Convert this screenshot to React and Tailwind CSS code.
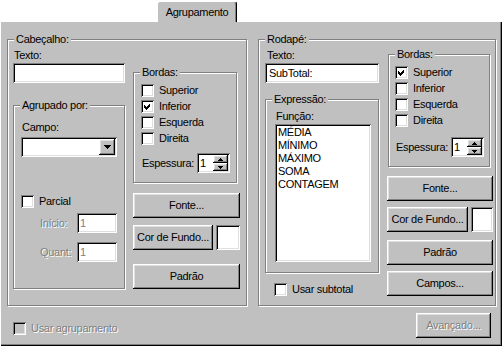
import React from "react";

const RAISED =
  "bg-[#c0c0c0] shadow-[inset_-1px_-1px_0_#000,inset_1px_1px_0_#fff,inset_-2px_-2px_0_#808080,inset_2px_2px_0_#dfdfdf]";
const SUNKEN =
  "shadow-[inset_1px_1px_0_#808080,inset_-1px_-1px_0_#fff,inset_2px_2px_0_#000,inset_-2px_-2px_0_#dfdfdf]";
const DISABLED_TEXT = "text-[#808080] [text-shadow:1px_1px_0_#fff]";

function Group({ label, className = "", children }) {
  return (
    <div
      className={`relative border border-[#808080] shadow-[inset_1px_1px_0_#fff,1px_1px_0_#fff] ${className}`}
    >
      <span className="absolute -top-[7px] left-[6px] px-[2px] bg-[#c0c0c0] leading-[13px] whitespace-nowrap">
        {label}
      </span>
      {children}
    </div>
  );
}

function Check({ checked, disabled, label, className = "" }) {
  return (
    <div className={`flex items-center h-[13px] ${className}`}>
      <div
        className={`w-[13px] h-[13px] shrink-0 ${SUNKEN} ${disabled ? "bg-[#c0c0c0]" : "bg-white"}`}
      >
        {checked && (
          <svg width="13" height="13" viewBox="0 0 13 13" shapeRendering="crispEdges">
            <path d="M3 5 L5 7 L9 3 L9 6 L5 10 L3 8 Z" fill="#000" />
          </svg>
        )}
      </div>
      <span className={`ml-[5px] leading-[13px] whitespace-nowrap ${disabled ? DISABLED_TEXT : ""}`}>
        {label}
      </span>
    </div>
  );
}

function Button({ children, className = "", disabled }) {
  return (
    <div
      className={`flex items-center justify-center h-[25px] ${RAISED} ${className} ${disabled ? DISABLED_TEXT : ""}`}
    >
      {children}
    </div>
  );
}

function Spin() {
  return (
    <div className={`flex w-[33px] h-[20px] p-[2px] bg-white ${SUNKEN}`}>
      <div className="flex-1 pl-[1px] leading-[16px]">1</div>
      <div className="flex flex-col w-[15px]">
        <div className={`h-[8px] flex items-center justify-center ${RAISED}`}>
          <svg width="5" height="3" viewBox="0 0 5 3" shapeRendering="crispEdges">
            <path d="M2 0 H3 V1 H4 V2 H5 V3 H0 V2 H1 V1 H2 Z" fill="#000" />
          </svg>
        </div>
        <div className={`h-[8px] flex items-center justify-center ${RAISED}`}>
          <svg width="5" height="3" viewBox="0 0 5 3" shapeRendering="crispEdges">
            <path d="M0 0 H5 V1 H4 V2 H3 V3 H2 V2 H1 V1 H0 Z" fill="#000" />
          </svg>
        </div>
      </div>
    </div>
  );
}

function Bordas({ className, pt, pl, spinMt, checks }) {
  return (
    <Group label="Bordas:" className={className}>
      <div className={`flex flex-col ${pt} ${pl}`}>
        <div className="flex flex-col gap-[3px]">
          <Check label="Superior" checked={checks[0]} />
          <Check label="Inferior" checked={checks[1]} />
          <Check label="Esquerda" checked={checks[2]} />
          <Check label="Direita" checked={checks[3]} />
        </div>
        <div className={`flex items-center ${spinMt}`}>
          <span className="w-[56px] pl-[1px] leading-[13px]">Espessura:</span>
          <Spin />
        </div>
      </div>
    </Group>
  );
}

export default function App() {
  return (
    <div className="w-[502px] h-[346px] bg-white flex flex-col font-['Liberation_Sans',Arial,sans-serif] text-[11px] leading-[13px] tracking-[-0.3px] text-black overflow-hidden">
      <div className="h-[21px] shrink-0 relative z-10 flex items-end">
        <div className="ml-[157px] mb-[-1px] w-[80px] h-[21px] bg-[#c0c0c0] rounded-t-[3px] border-l border-t border-r border-l-white border-t-white border-r-black shadow-[inset_-1px_0_0_#808080] flex items-center justify-center">
          Agrupamento
        </div>
      </div>

      <div className="flex-1 bg-[#c0c0c0] shadow-[inset_1px_1px_0_#fff,inset_-1px_-1px_0_#000,inset_-2px_-2px_0_#808080] flex flex-col pt-[18px] pl-[7px]">
        <div className="flex gap-[11px]">
          {/* Cabeçalho */}
          <Group label="Cabeçalho:" className="w-[240px] h-[267px] pt-[9px] pl-[5px]">
            <div className="flex gap-[8px]">
              <div className="w-[112px] flex flex-col">
                <span className="h-[13px] pl-[1px]">Texto:</span>
                <div className={`mt-[1px] h-[20px] bg-white ${SUNKEN}`} />
                <Group label="Agrupado por:" className="mt-[22px] h-[184px] pt-[15px] pl-[7px]">
                  <div className="flex flex-col">
                    <span className="h-[13px] pl-[1px]">Campo:</span>
                    <div className={`mt-[3px] w-[96px] h-[20px] p-[2px] bg-white flex ${SUNKEN}`}>
                      <div className="flex-1" />
                      <div className={`w-[16px] flex items-center justify-center ${RAISED}`}>
                        <svg width="7" height="4" viewBox="0 0 7 4" shapeRendering="crispEdges">
                          <path d="M0 0 H7 V1 H6 V2 H5 V3 H4 V4 H3 V3 H2 V2 H1 V1 H0 Z" fill="#000" />
                        </svg>
                      </div>
                    </div>
                    <Check label="Parcial" className="mt-[38px]" />
                    <div className="mt-[5px] flex items-center ml-[19px]">
                      <span className={`w-[37px] ${DISABLED_TEXT}`}>Início:</span>
                      <div className={`w-[40px] h-[20px] bg-white pl-[3px] leading-[20px] text-[#808080] ${SUNKEN}`}>1</div>
                    </div>
                    <div className="mt-[9px] flex items-center ml-[19px]">
                      <span className={`w-[37px] ${DISABLED_TEXT}`}>Quant:</span>
                      <div className={`w-[40px] h-[20px] bg-white pl-[3px] leading-[20px] text-[#808080] ${SUNKEN}`}>1</div>
                    </div>
                  </div>
                </Group>
              </div>
              <div className="w-[107px] flex flex-col">
                <Bordas
                  className="mt-[23px] w-[104px] h-[111px]"
                  pt="pt-[11px]"
                  pl="pl-[7px]"
                  spinMt="mt-[8px]"
                  checks={[false, true, false, false]}
                />
                <Button className="mt-[10px]">Fonte...</Button>
                <div className="mt-[7px] flex gap-[3px]">
                  <Button className="w-[80px]">Cor de Fundo...</Button>
                  <div className={`flex-1 h-[25px] bg-white ${SUNKEN}`} />
                </div>
                <Button className="mt-[14px]">Padrão</Button>
              </div>
            </div>
          </Group>

          {/* Rodapé */}
          <Group label="Rodapé:" className="w-[238px] h-[267px] pt-[9px] pl-[6px]">
            <div className="flex gap-[8px]">
              <div className="w-[114px] flex flex-col">
                <span className="h-[13px] pl-[2px]">Texto:</span>
                <div className={`mt-[1px] h-[20px] bg-white pl-[4px] leading-[20px] ${SUNKEN}`}>SubTotal:</div>
                <Group label="Expressão:" className="mt-[16px] h-[174px] pt-[10px] pl-[9px]">
                  <div className="flex flex-col">
                    <span className="h-[13px] pl-[1px]">Função:</span>
                    <div className={`mt-[1px] w-[96px] h-[138px] bg-white p-[2px] pl-[3px] flex flex-col ${SUNKEN}`}>
                      <span>MÉDIA</span>
                      <span>MÍNIMO</span>
                      <span>MÁXIMO</span>
                      <span>SOMA</span>
                      <span>CONTAGEM</span>
                    </div>
                  </div>
                </Group>
                <Check label="Usar subtotal" className="mt-[10px] ml-[9px]" />
              </div>
              <div className="w-[106px] flex flex-col">
                <Bordas
                  className="mt-[5px] ml-[1px] w-[102px] h-[113px]"
                  pt="pt-[11px]"
                  pl="pl-[6px]"
                  spinMt="mt-[10px]"
                  checks={[true, false, false, false]}
                />
                <Button className="mt-[9px]">Fonte...</Button>
                <div className="mt-[6px] flex gap-[3px]">
                  <Button className="w-[81px]">Cor de Fundo...</Button>
                  <div className={`flex-1 h-[25px] bg-white ${SUNKEN}`} />
                </div>
                <Button className="mt-[8px]">Padrão</Button>
                <Button className="mt-[6px]">Campos...</Button>
              </div>
            </div>
          </Group>
        </div>

        <div className="mt-[7px] flex items-start">
          <Check label="Usar agrupamento" disabled className="mt-[9px] ml-[6px]" />
          <Button disabled className="ml-auto mr-[11px] w-[75px]">Avançado...</Button>
        </div>
      </div>
    </div>
  );
}
